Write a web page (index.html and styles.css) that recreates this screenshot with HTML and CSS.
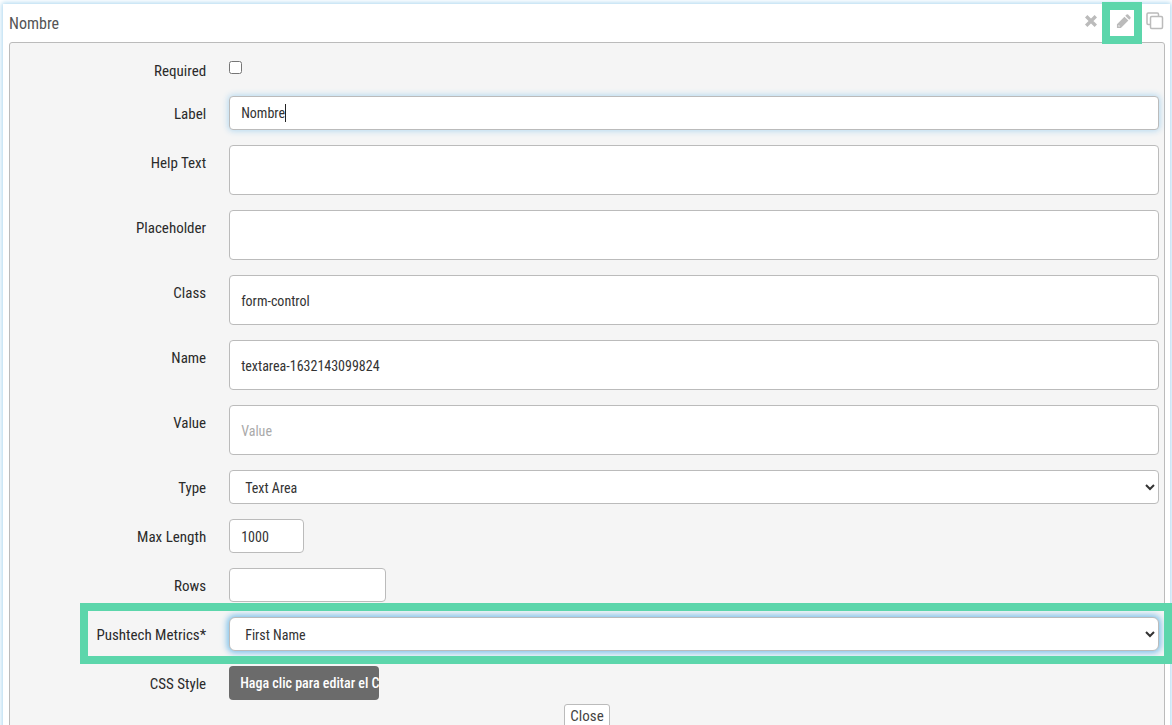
FILE: index.html
```html
<!DOCTYPE html>
<html lang="en">
<head>
<meta charset="utf-8">
<title>Nombre</title>
<link rel="stylesheet" href="styles.css">
</head>
<body>
<main class="field-card">
  <header class="card-head">
    <h1 class="card-title">Nombre</h1>
    <div class="actions">
      <button class="icon-btn" type="button" aria-label="Remove"><svg width="14" height="14" viewBox="0 0 14 14"><path d="M2.2 2.2L11.8 11.8M11.8 2.2L2.2 11.8" stroke="#bbb" stroke-width="3.4" fill="none"/></svg></button>
      <button class="icon-btn icon-btn-marked" type="button" aria-label="Edit"><svg width="15" height="15" viewBox="0 0 16 16"><path fill="#bbb" fill-rule="evenodd" d="M1 15V10.8L9 2.8L13.2 7L5.2 15ZM2.6 12.4V13.4H3.8L4.2 13L3 11.8ZM9.9 1.9L11.3 .6Q12.1 0 12.9 .6L15.4 3.1Q16 3.9 15.4 4.7L14.1 6.1Z"/></svg></button>
      <button class="icon-btn" type="button" aria-label="Copy"><svg width="18" height="18" viewBox="0 0 18 18" fill="none" stroke="#bbb" stroke-width="1.5"><path d="M4.5 12.5H2.2Q1 12.5 1 11.3V2.2Q1 1 2.2 1H11.3Q12.5 1 12.5 2.2V4.5"/><rect x="4.5" y="4.5" width="12" height="12" rx="1.2"/></svg></button>
    </div>
  </header>
  <form class="panel">
    <div class="row row-check">
      <label class="row-label" for="required">Required</label>
      <input class="check" type="checkbox" id="required">
    </div>
    <div class="row">
      <label class="row-label" for="label">Label</label>
      <div class="control-wrap">
        <input class="control control-active" type="text" id="label" value="Nombre">
        <span class="caret"></span>
      </div>
    </div>
    <div class="row">
      <label class="row-label" for="help">Help Text</label>
      <input class="control control-tall" type="text" id="help">
    </div>
    <div class="row">
      <label class="row-label" for="placeholder">Placeholder</label>
      <input class="control control-tall" type="text" id="placeholder">
    </div>
    <div class="row">
      <label class="row-label" for="class">Class</label>
      <input class="control control-tall" type="text" id="class" value="form-control">
    </div>
    <div class="row">
      <label class="row-label" for="name">Name</label>
      <input class="control control-tall" type="text" id="name" value="textarea-1632143099824">
    </div>
    <div class="row">
      <label class="row-label" for="value">Value</label>
      <input class="control control-tall" type="text" id="value" placeholder="Value">
    </div>
    <div class="row">
      <label class="row-label" for="type">Type</label>
      <select class="control control-select" id="type"><option>Text Area</option></select>
    </div>
    <div class="row">
      <label class="row-label" for="maxlength">Max Length</label>
      <input class="control control-short" type="text" id="maxlength" value="1000">
    </div>
    <div class="row">
      <label class="row-label" for="rows">Rows</label>
      <input class="control control-medium" type="text" id="rows">
    </div>
    <div class="row row-marked">
      <label class="row-label" for="metrics">Pushtech Metrics*</label>
      <select class="control control-select control-focus" id="metrics"><option>First Name</option></select>
    </div>
    <div class="row">
      <label class="row-label" for="css">CSS Style</label>
      <button class="css-btn" type="button" id="css">Haga clic para editar el CSS</button>
    </div>
    <button class="close-btn" type="button">Close</button>
  </form>
</main>
</body>
</html>
```
FILE: styles.css
```css
* {
  box-sizing: border-box;
}

body {
  margin: 0;
  height: 100vh;
  overflow: hidden;
  background: #fff;
  color: #2a2a2a;
  font-family: "Roboto Condensed", Roboto, sans-serif;
  font-size: 14px;
  line-height: 20px;
}

input,
select,
button {
  margin: 0;
  font: inherit;
}

.field-card {
  margin: 4px 2px 0 3px;
  padding: 0 5px 8px 6px;
  box-shadow: 0 0 5px 1px #a9d5ef;
}

.card-head {
  display: flex;
  justify-content: space-between;
  height: 38px;
}

.card-title {
  margin: 0;
  padding-top: 10px;
  color: #555;
  font-size: 16px;
  font-weight: 400;
}

.actions {
  display: flex;
  align-items: center;
  gap: 8px;
  height: 34px;
  margin-right: -2px;
}

.icon-btn {
  display: flex;
  align-items: center;
  justify-content: center;
  flex: none;
  width: 24px;
  height: 24px;
  padding: 0;
  border: 0;
  background: transparent;
}

.icon-btn-marked {
  position: relative;
}

.icon-btn-marked::after {
  content: "";
  position: absolute;
  inset: -7px -7px -11px -9px;
  border: 8px solid #5cd6ab;
}

.panel {
  display: flex;
  flex-direction: column;
  gap: 15px;
  padding: 10px 5px 10px 1px;
  border: 1px solid #bbb;
  border-radius: 3px;
  background: #f5f5f5;
}

.row {
  position: relative;
  display: grid;
  grid-template-columns: 17% 1fr;
  column-gap: 23px;
  align-items: start;
}

.row-check {
  height: 28px;
}

.row-label {
  padding-top: 8px;
  font-size: 15px;
  text-align: right;
}

.check {
  width: 13px;
  height: 13px;
  margin-top: 8px;
}

.control-wrap {
  position: relative;
}

.control {
  display: block;
  width: 100%;
  height: 34px;
  padding: 7px 11px 5px;
  border: 1px solid #bbb;
  border-radius: 4px;
  background: #fff;
  color: #333;
}

.control::placeholder {
  color: #aaa;
}

.control-active {
  padding: 6px 11px;
  box-shadow: 0 0 6px 1px #b5d9f0;
}

.control-focus {
  border-radius: 6px;
  box-shadow: 0 0 6px 2px #7cc0ea;
}

.control-tall {
  height: 50px;
}

.control-select {
  padding: 2px 0 0 11px;
}

.control-short {
  width: 75px;
}

.control-medium {
  width: 157px;
}

.caret {
  position: absolute;
  top: 8px;
  left: 56px;
  width: 1px;
  height: 18px;
  background: #222;
}

.row-marked::after {
  content: "";
  position: absolute;
  inset: -14px -13px -13px 69px;
  border: 8px solid #5cd6ab;
  pointer-events: none;
}

.css-btn {
  width: 150px;
  height: 34px;
  padding: 0 0 0 11px;
  overflow: hidden;
  border: 0;
  border-radius: 4px;
  background: #6b6b6b;
  color: #fff;
  font-weight: 500;
  text-align: left;
  white-space: nowrap;
}

.close-btn {
  align-self: center;
  height: 24px;
  margin-top: -11px;
  margin-left: 4px;
  padding: 0 5px;
  border: 1px solid #bbb;
  border-radius: 3px;
  background: #fff;
  color: #444;
  font-size: 15px;
}
```
